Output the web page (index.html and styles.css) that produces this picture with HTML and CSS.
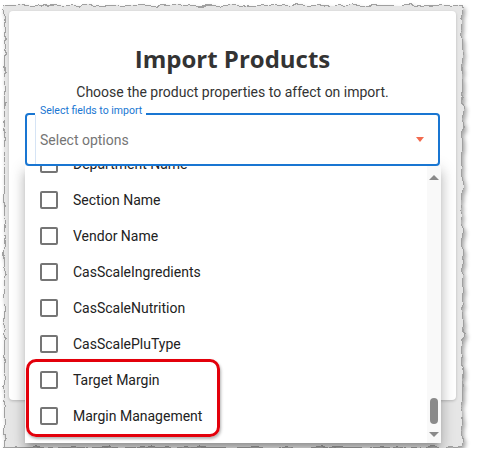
FILE: index.html
```html
<!DOCTYPE html>
<html>
<head>
<meta charset="utf-8">
<link rel="stylesheet" href="styles.css">
</head>
<body>
<svg class="defs" width="0" height="0" aria-hidden="true">
  <filter id="torn" x="-3%" y="-3%" width="106%" height="106%">
    <feTurbulence type="fractalNoise" baseFrequency="0.09" numOctaves="3" seed="4" result="noise"/>
    <feDisplacementMap in="SourceGraphic" in2="noise" scale="7" xChannelSelector="R" yChannelSelector="G"/>
  </filter>
</svg>
<div class="frame">
  <div class="dialog">
    <h1 class="title">Import Products</h1>
    <p class="subtitle">Choose the product properties to affect on import.</p>
    <div class="field">
      <span class="field-label">Select fields to import</span>
      <span class="notch-line"></span>
      <span class="placeholder">Select options</span>
      <span class="caret"></span>
    </div>
  </div>
  <div class="menu">
    <div class="menu-list">
      <div class="option"><span class="box"></span><span class="option-text">Department Name</span></div>
      <div class="option"><span class="box"></span><span class="option-text">Section Name</span></div>
      <div class="option"><span class="box"></span><span class="option-text">Vendor Name</span></div>
      <div class="option"><span class="box"></span><span class="option-text">CasScaleIngredients</span></div>
      <div class="option"><span class="box"></span><span class="option-text">CasScaleNutrition</span></div>
      <div class="option"><span class="box"></span><span class="option-text">CasScalePluType</span></div>
      <div class="option"><span class="box"></span><span class="option-text">Target Margin</span></div>
      <div class="option"><span class="box"></span><span class="option-text">Margin Management</span></div>
    </div>
    <div class="scrollbar">
      <span class="arrow-up"></span>
      <span class="thumb"></span>
      <span class="arrow-down"></span>
    </div>
  </div>
  <div class="highlight"></div>
</div>
</body>
</html>
```

FILE: styles.css
```css
html, body {
  margin: 0;
  padding: 0;
  background: #ffffff;
}

.defs {
  position: absolute;
  width: 0;
  height: 0;
}

.frame {
  position: relative;
  z-index: 0;
  margin: 5px 0 0 4px;
  width: 459px;
  height: 443px;
  padding: 6px 0 0 5px;
  box-sizing: border-box;
}

.frame::before {
  content: "";
  position: absolute;
  inset: 0;
  z-index: -1;
  background: #e6e6e6;
  border: 1px solid #a0a0a0;
  filter: url(#torn) drop-shadow(2px 3px 2px rgba(0, 0, 0, 0.35));
}

.dialog {
  width: 447px;
  height: 389px;
  background: #ffffff;
  border-radius: 4px;
  box-shadow: 0 1px 3px rgba(0, 0, 0, 0.2);
  padding-top: 32px;
  box-sizing: border-box;
}

.title {
  margin: 0;
  text-align: center;
  font-family: "Open Sans", sans-serif;
  font-weight: 700;
  font-size: 24px;
  line-height: 32px;
  color: #333333;
}

.subtitle {
  margin: 7px 0 0;
  text-align: center;
  font-family: Roboto, sans-serif;
  font-size: 14px;
  line-height: 20px;
  color: #333333;
}

.field {
  position: relative;
  z-index: 3;
  margin: 11px 16px 0;
  height: 53px;
  box-sizing: border-box;
  border: 2px solid #1976d2;
  border-radius: 4px;
  background: #ffffff;
  display: flex;
  align-items: center;
  padding-left: 13px;
}

.field-label {
  position: absolute;
  left: 8px;
  top: -10px;
  padding: 0 4px 0 5px;
  background: #ffffff;
  font-family: Roboto, sans-serif;
  font-size: 10.5px;
  line-height: 12px;
  color: #1976d2;
}

.notch-line {
  position: absolute;
  left: 8px;
  top: 0;
  bottom: 0;
  width: 1px;
  background: #d6e4f5;
}

.placeholder {
  flex: 1;
  font-family: Roboto, sans-serif;
  font-size: 14px;
  color: #757575;
}

.caret {
  width: 0;
  height: 0;
  margin-right: 14px;
  border-left: 4px solid transparent;
  border-right: 4px solid transparent;
  border-top: 5px solid #f26b4f;
}

.menu {
  position: absolute;
  z-index: 2;
  left: 21px;
  top: 161px;
  width: 416px;
  height: 277px;
  background: #ffffff;
  overflow: hidden;
  box-shadow: 0 5px 5px -3px rgba(0, 0, 0, 0.2), 0 8px 10px 1px rgba(0, 0, 0, 0.14), 0 3px 14px 2px rgba(0, 0, 0, 0.12);
}

.menu-list {
  margin-top: -20px;
}

.option {
  height: 36px;
  display: flex;
  align-items: center;
  padding-left: 15px;
}

.box {
  width: 18px;
  height: 18px;
  box-sizing: border-box;
  border: 2px solid #757575;
  border-radius: 2px;
  margin-right: 15px;
}

.option-text {
  font-family: Roboto, sans-serif;
  font-size: 14px;
  color: #222222;
}

.scrollbar {
  position: absolute;
  right: 0;
  top: 0;
  bottom: 0;
  width: 14px;
  background: #f9f9f9;
  display: flex;
  flex-direction: column;
  align-items: center;
}

.arrow-up {
  margin-top: 9px;
  width: 0;
  height: 0;
  border-left: 5px solid transparent;
  border-right: 5px solid transparent;
  border-bottom: 5px solid #8a8a8a;
}

.thumb {
  margin-top: auto;
  margin-bottom: 8px;
  width: 8px;
  height: 26px;
  border-radius: 4px;
  background: #8a8a8a;
}

.arrow-down {
  margin-bottom: 6px;
  width: 0;
  height: 0;
  border-left: 5px solid transparent;
  border-right: 5px solid transparent;
  border-top: 5px solid #8a8a8a;
}

.highlight {
  position: absolute;
  z-index: 4;
  left: 22px;
  top: 354px;
  width: 194px;
  height: 78px;
  box-sizing: border-box;
  border: 3px solid #e3000b;
  border-radius: 10px;
  box-shadow: 1px 2px 3px rgba(0, 0, 0, 0.3);
}
```
